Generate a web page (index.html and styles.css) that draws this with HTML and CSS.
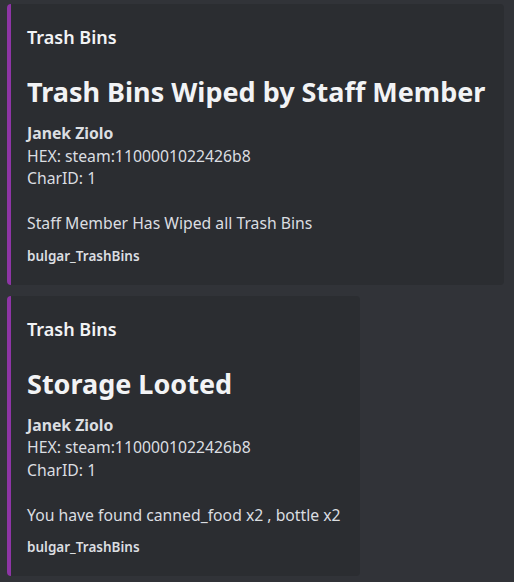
FILE: index.html
```html
<!doctype html>
<html>
<head>
  <meta charset="utf-8">
  <title>Trash Bins</title>
  <link rel="stylesheet" href="styles.css">
</head>
<body>
  <div id="messages">
    <div class="embed">
      <div class="embed_author">Trash Bins</div>
      <div class="embed_desc">
        <h1>Trash Bins Wiped by Staff Member</h1>
        <p><strong>Janek Ziolo</strong><br>
        HEX: steam:1100001022426b8<br>
        CharID: 1<br>
        <br>
        Staff Member Has Wiped all Trash Bins</p>
      </div>
      <div class="embed_footer">bulgar_TrashBins</div>
    </div>

    <div class="embed">
      <div class="embed_author">Trash Bins</div>
      <div class="embed_desc">
        <h1>Storage Looted</h1>
        <p><strong>Janek Ziolo</strong><br>
        HEX: steam:1100001022426b8<br>
        CharID: 1<br>
        <br>
        You have found canned_food x2 , bottle x2</p>
      </div>
      <div class="embed_footer">bulgar_TrashBins</div>
    </div>
  </div>
</body>
</html>
```

FILE: styles.css
```css
* {
  margin: 0; padding: 0;
}
html, body {
  width: 100%;
  height: 100%;
}
body {
  background: #313338;
  font-family: 'Noto Sans', 'Open Sans', sans-serif;
  color: #dbdee1;
  overflow: hidden;
}
#messages {
  display: flex;
  flex-direction: column;
  align-items: flex-start;
  gap: 11px;
  padding: 4px 10px 0 7px;
}
.embed {
  background: #2b2d31;
  border-left: 4px solid #8e35a6;
  border-radius: 4px;
  padding: 22px 19px 19px 16px;
}
.embed_author {
  font-size: 18px;
  line-height: 22px;
  font-weight: 600;
  color: #f2f3f5;
}
.embed_desc h1 {
  font-size: 27px;
  line-height: 34px;
  font-weight: 700;
  color: #f2f3f5;
  margin: 27px 0 13px;
  white-space: nowrap;
}
.embed_desc p {
  font-size: 15.75px;
  line-height: 22.5px;
  white-space: nowrap;
}
.embed_desc strong {
  font-weight: 700;
  color: #dbdee1;
}
.embed_footer {
  font-size: 13.5px;
  line-height: 20px;
  font-weight: 600;
  margin-top: 11px;
}
```
